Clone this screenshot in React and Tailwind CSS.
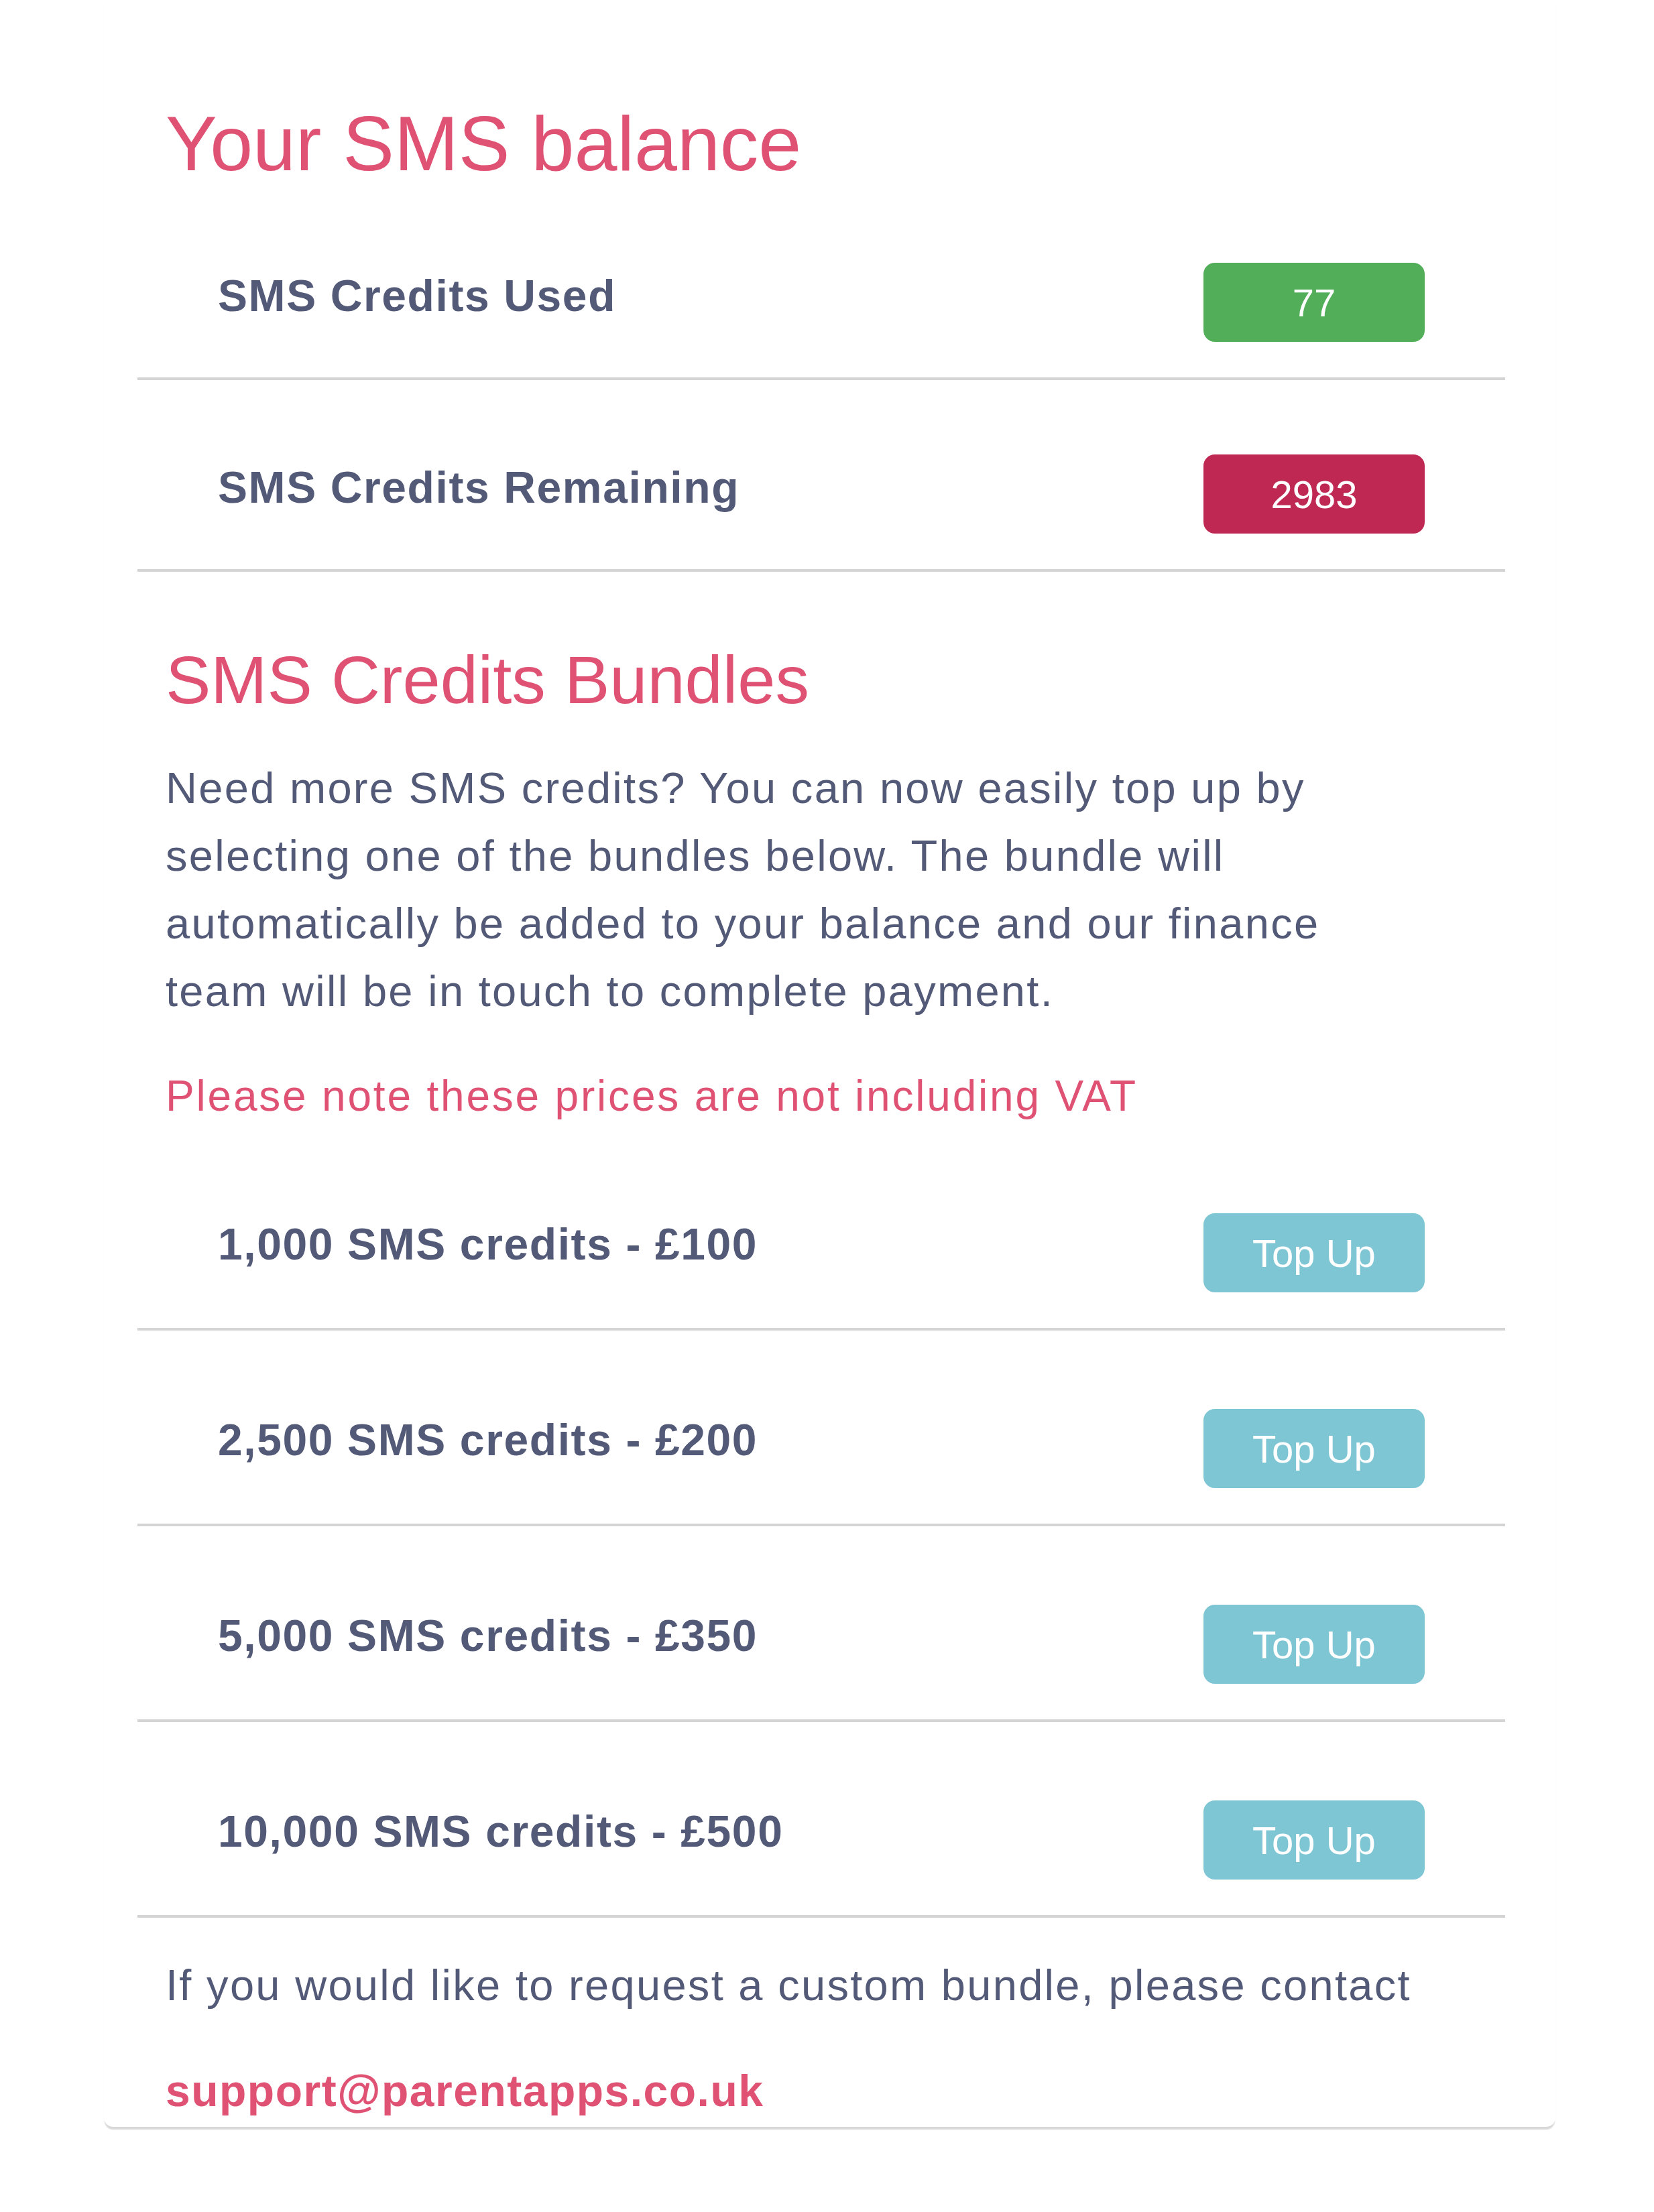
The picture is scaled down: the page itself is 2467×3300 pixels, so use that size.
import React from 'react';

// balance rows shown at the top of the card
const balance = [
  { label: 'SMS Credits Used', value: '77', badge: 'bg-[#52ae59]' },
  { label: 'SMS Credits Remaining', value: '2983', badge: 'bg-[#be2853]' },
];

const bundles = [
  { credits: '1,000', price: '£100' },
  { credits: '2,500', price: '£200' },
  { credits: '5,000', price: '£350' },
  { credits: '10,000', price: '£500' },
];

const BalanceRow = ({ label, value, badge }) => (
  <div className="flex items-start justify-between border-b-4 border-[#d4d4d4] px-[120px] pt-[111px] pb-[53px]">
    <span className="mt-[16px] text-[66px] leading-[66px] font-bold tracking-[1.6px] text-[#535a78]">
      {label}
    </span>
    <span className={`flex h-[118px] w-[330px] items-center justify-center rounded-[17px] text-[58px] text-white ${badge}`}>
      {value}
    </span>
  </div>
);

const BundleRow = ({ credits, price }) => (
  <div className="flex items-start justify-between border-b-4 border-[#d4d4d4] px-[120px] pt-[117px] pb-[53px]">
    <span className="mt-[13px] text-[66px] leading-[66px] font-bold tracking-[1.6px] text-[#535a78]">
      {credits} SMS credits - {price}
    </span>
    <button
      type="button"
      className="flex h-[118px] w-[330px] items-center justify-center rounded-[17px] bg-[#7fc6d4] text-[58px] text-white"
    >
      Top Up
    </button>
  </div>
);

const App = () => {
  return (
    <div className="min-h-screen bg-white font-['Liberation_Sans',Arial,sans-serif] antialiased">
      <div className="ml-[155px] w-[2165px] rounded-b-[14px] bg-white pt-[157px] pr-[75px] pb-[3px] pl-[50px] shadow-[0_5px_2px_-1px_rgba(0,0,0,0.16)]">
        <h1 className="mb-[9px] pl-[42px] text-[115px] leading-[115px] font-normal text-[#df5273]">
          Your SMS balance
        </h1>

        {balance.map((row) => (
          <BalanceRow key={row.label} {...row} />
        ))}

        <h2 className="mt-[111px] pl-[42px] text-[101px] leading-[101px] font-normal text-[#df5273]">
          SMS Credits Bundles
        </h2>
        <p className="mt-[60px] w-[1840px] pl-[42px] text-[65px] leading-[101px] tracking-[2.3px] text-[#535a78]">
          Need more SMS credits? You can now easily top up by selecting one of the bundles below. The bundle will
          automatically be added to your balance and our finance team will be in touch to complete payment.
        </p>
        <p className="mt-[56px] mb-[7px] pl-[42px] text-[64px] leading-[101px] tracking-[2.8px] text-[#df5273]">
          Please note these prices are not including VAT
        </p>

        {bundles.map((b) => (
          <BundleRow key={b.credits} {...b} />
        ))}

        <p className="mt-[50px] pl-[42px] text-[65px] leading-[101px] tracking-[2.3px] text-[#535a78]">
          If you would like to request a custom bundle, please contact
        </p>
        <p className="mt-[57px] pl-[42px] text-[66px] leading-[101px] font-bold tracking-[1.5px] text-[#df5273]">
          support@parentapps.co.uk
        </p>
      </div>
    </div>
  );
};

export default App;
